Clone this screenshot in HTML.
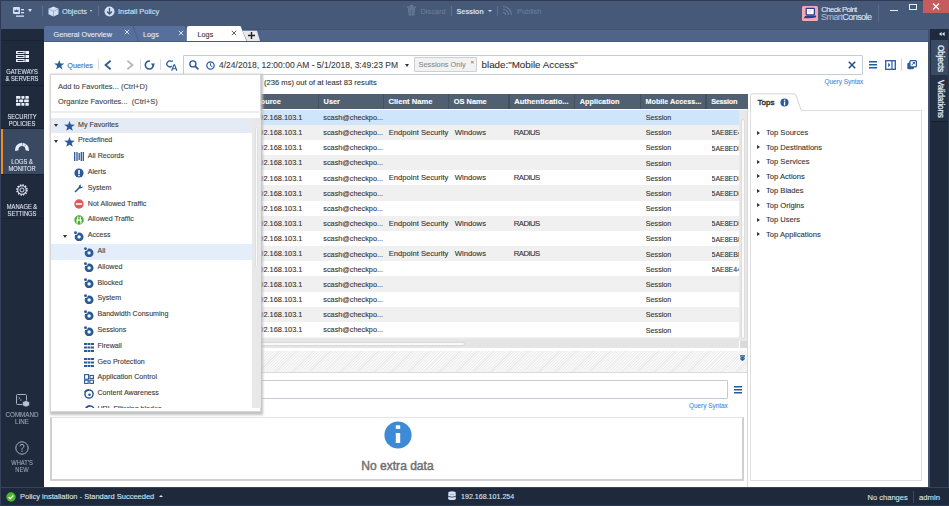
<!DOCTYPE html>
<html><head><meta charset="utf-8">
<style>
*{margin:0;padding:0;box-sizing:border-box}
html,body{width:949px;height:506px;overflow:hidden;background:#fff;font-family:"Liberation Sans",sans-serif;}
.a{position:absolute}
.t{position:absolute;white-space:nowrap;line-height:1;-webkit-text-stroke:0.1px currentColor}
#top{left:0;top:0;width:949px;height:28.5px;background:#465979;border-top:1px solid #2e3b52;border-left:1px solid #2e3b52}
#tabband{left:0;top:28.5px;width:949px;height:13.5px;background:#4f6488;border-top:0.5px solid #42546f;border-bottom:1px solid #475b7c}
#side{left:0;top:28.5px;width:44px;height:459px;background:#1f2a3d;border-left:1px solid #34435a}
#rstrip{left:928.3px;top:28.5px;width:20.7px;height:459px;background:#1f2a3d;border-left:2px solid #3f5272;border-right:1.5px solid #2c3a52}
#main{left:44px;top:41.8px;width:884.3px;height:445.5px;background:#fff;border-top-right-radius:3px}
#status{left:0;top:487px;width:949px;height:19px;background:#1e293b;border-left:1px solid #34435a}
.sb{color:#dde5f0;font-size:7.8px;text-align:center;width:60px;left:-8px;line-height:7px;transform:scaleX(0.74);transform-origin:30px 0}
.tl{color:#dbe6f5;font-size:7.4px}
.hd{position:absolute;top:93.7px;height:15.7px;background:#515f73}
.hc{position:absolute;top:0;height:15.5px;border-left:1px solid #445062;color:#fff;font-weight:bold;font-size:7.4px;line-height:15.5px;padding-left:5px;white-space:nowrap;overflow:hidden}
.row{position:absolute;left:255px;width:484px;height:15.25px}
.c{position:absolute;top:0;line-height:15.25px;font-size:7.6px;color:#3a3a3a;white-space:nowrap}
.tr{position:absolute;font-size:7.6px;color:#444;white-space:nowrap;line-height:1}
.tops{position:absolute;left:758.6px;font-size:7.6px;color:#333;white-space:nowrap;line-height:1;-webkit-text-stroke:0.1px #333}
.hdt{font-size:7.4px;color:#fff;font-weight:bold}
.dt{color:#303030}
.tt{font-size:7.1px;color:#3a3a3a}
.tops:before{content:"";position:absolute;left:-1.5px;top:1.8px;border-left:3px solid #333;border-top:2.2px solid transparent;border-bottom:2.2px solid transparent}
.tops span{position:absolute;left:7.4px;top:0}
</style></head><body>
<!-- top bar -->
<div id="top" class="a"></div>
<div id="tabband" class="a"></div>
<div id="side" class="a"></div>
<div id="rstrip" class="a"></div>
<div id="main" class="a"></div>
<div id="status" class="a"></div>
<div class="a" style="left:0;top:487px;width:949px;height:1px;background:#34435b"></div>
<div class="a" style="left:0;top:505px;width:949px;height:1px;background:#2b3950"></div>

<!-- top toolbar -->
<svg class="a" style="left:12.5px;top:6.8px" width="12" height="10" viewBox="0 0 12 10">
 <rect x="0" y="0" width="7" height="7" rx="1" fill="#cfe0f7"/>
 <path d="M1.5 5 L1.5 2.5 L2.8 3.6 L3.5 2 L4.2 3.6 L5.5 2.5 L5.5 5 Z" fill="#445673"/>
 <rect x="8" y="2" width="3" height="1.3" fill="#cfe0f7"/><rect x="8" y="5" width="3" height="1.3" fill="#cfe0f7"/>
 <rect x="3" y="8.5" width="8" height="1.3" fill="#cfe0f7"/>
</svg>
<div class="a" style="left:28px;top:9px;border-top:3px solid #cfe0f7;border-left:2px solid transparent;border-right:2px solid transparent"></div>
<div class="a" style="left:42px;top:6px;width:1px;height:10px;background:#5f7090"></div>
<svg class="a" style="left:48.4px;top:5.6px" width="11" height="11" viewBox="0 0 11 11">
 <path d="M5.5 0.5 L10.5 2.8 L10.5 8.2 L5.5 10.5 L0.5 8.2 L0.5 2.8 Z" fill="#cfe0f7"/>
 <path d="M0.8 3 L5.5 5.2 L10.2 3 M5.5 5.2 L5.5 10.3" stroke="#8ea3c4" stroke-width="0.8" fill="none"/>
</svg>
<div class="t tl" style="left:62px;top:7.5px">Objects</div>
<div class="a" style="left:89.8px;top:9.8px;border-top:2.6px solid #cfe0f7;border-left:1.9px solid transparent;border-right:1.9px solid transparent"></div>
<div class="a" style="left:98px;top:6px;width:1px;height:10px;background:#5f7090"></div>
<svg class="a" style="left:104px;top:6px" width="11" height="11" viewBox="0 0 11 11">
 <circle cx="5.5" cy="5.5" r="5" fill="#cfe0f7"/>
 <path d="M5.5 2 L5.5 8 M3 5.5 L5.5 8 L8 5.5" stroke="#445673" stroke-width="1.3" fill="none"/>
</svg>
<div class="t tl" style="left:118px;top:7.5px">Install Policy</div>

<svg class="a" style="left:407px;top:5px" width="9" height="11" viewBox="0 0 9 11">
 <rect x="0" y="1.5" width="9" height="1.2" fill="#6b7d99"/><rect x="3" y="0" width="3" height="1.5" fill="#6b7d99"/>
 <path d="M1 3.2 L8 3.2 L7.3 10.5 L1.7 10.5 Z" fill="#6b7d99"/>
 <path d="M3 4.5 L3 9.5 M4.5 4.5 L4.5 9.5 M6 4.5 L6 9.5" stroke="#445673" stroke-width="0.6"/>
</svg>
<div class="t" style="left:420.5px;top:7.5px;font-size:7.4px;color:#6b7d99">Discard</div>
<div class="a" style="left:451px;top:6px;width:1px;height:10px;background:#5f7090"></div>
<div class="t" style="left:456.5px;top:7.5px;font-size:7.4px;color:#cfe0f7;font-weight:bold;letter-spacing:-0.2px;-webkit-text-stroke:0">Session</div>
<div class="a" style="left:487.8px;top:9.8px;border-top:2.8px solid #cfe0f7;border-left:2px solid transparent;border-right:2px solid transparent"></div>
<div class="a" style="left:497px;top:6px;width:1px;height:10px;background:#5f7090"></div>
<svg class="a" style="left:502px;top:5px" width="11" height="11" viewBox="0 0 11 11">
 <path d="M1 1.5 A8.5 8.5 0 0 1 9.5 10 M1 4.5 A5.5 5.5 0 0 1 6.5 10 M1 7.5 A2.5 2.5 0 0 1 3.5 10" stroke="#6b7d99" stroke-width="1.1" fill="none"/>
</svg>
<div class="t" style="left:517px;top:7.5px;font-size:7.4px;color:#6b7d99">Publish</div>

<!-- logo -->
<div class="a" style="left:802px;top:6px;width:16px;height:15px;background:#f3a8b6;border-radius:1.5px"></div>
<svg class="a" style="left:802px;top:6px" width="16" height="15" viewBox="0 0 16 15">
 <rect x="4.2" y="2.3" width="8.2" height="6.6" rx="0.8" fill="#fff" stroke="#2b3d8c" stroke-width="1.3"/>
 <path d="M6 4.3 L10 4.3 M6 6 L9 6" stroke="#c9a0c8" stroke-width="0.5"/>
 <path d="M1.8 12.2 Q2.5 10 5 9.6 L14 9.6 L14.2 11.2 Q10 12.8 1.8 12.2 Z" fill="#2b3d8c"/>
</svg>
<div class="t" style="left:821.3px;top:6.2px;font-size:7.7px;color:#e9eef6;letter-spacing:-0.55px">Check Point</div>
<div class="t" style="left:821px;top:12.6px;font-size:9px;color:#dce6f4;letter-spacing:-0.55px"><span style="color:#a9b8cf">Smart</span>Console</div>
<div class="a" style="left:878px;top:5px;width:1px;height:17px;background:#586a88"></div>
<div class="a" style="left:890px;top:9.5px;width:8px;height:1.5px;background:#e8eef8"></div>
<div class="a" style="left:909px;top:4px;width:8px;height:6px;border:1px solid #e8eef8;border-top-width:1.5px"></div>
<div class="a" style="left:923px;top:0;width:26px;height:13px;background:#c65c5e"></div>
<svg class="a" style="left:932px;top:3px" width="8" height="7" viewBox="0 0 8 7"><path d="M1 0.5 L7 6.5 M7 0.5 L1 6.5" stroke="#fff" stroke-width="1.3"/></svg>

<!-- tabs -->
<svg class="a" style="left:44px;top:26px" width="216" height="15" viewBox="0 0 216 15">
 <path d="M0 15 L0 2 Q0 0 2 0 L88.5 0 L94.5 15 Z" fill="#56709b"/>
 <path d="M89 0.5 L94.5 15" stroke="#4a5f82" stroke-width="0.8"/>
 <path d="M89.5 0 L141 0 L143 15 L95 15 Z" fill="#56709b"/>
 <path d="M142.8 15 L142.8 2 Q142.8 0 145 0 L196.5 0 L202.5 15 Z" fill="#fff"/>
 <path d="M198.5 4.8 L213 4.8 L216 15 L203 15 Z" fill="#e9e9e9"/>
</svg>
<div class="t" style="left:53.5px;top:31px;font-size:7.3px;color:#e4ecf7">General Overview</div>
<svg class="a" style="left:123.5px;top:29.4px" width="6" height="6" viewBox="0 0 6 6"><path d="M0.8 0.8 L5.2 5.2 M5.2 0.8 L0.8 5.2" stroke="#eef3fa" stroke-width="0.85"/></svg>
<div class="t" style="left:143px;top:31px;font-size:7.3px;color:#e4ecf7">Logs</div>
<svg class="a" style="left:177.6px;top:29.6px" width="6" height="6" viewBox="0 0 6 6"><path d="M0.8 0.8 L5.2 5.2 M5.2 0.8 L0.8 5.2" stroke="#eef3fa" stroke-width="0.85"/></svg>
<div class="t" style="left:197.5px;top:31px;font-size:7.3px;color:#333">Logs</div>
<svg class="a" style="left:231.4px;top:29.6px" width="6" height="6" viewBox="0 0 6 6"><path d="M0.8 0.8 L5.2 5.2 M5.2 0.8 L0.8 5.2" stroke="#444" stroke-width="0.85"/></svg>
<svg class="a" style="left:248px;top:32px" width="7" height="7" viewBox="0 0 7 7"><path d="M3.5 0 L3.5 7 M0 3.5 L7 3.5" stroke="#222" stroke-width="1.4"/></svg>

<!-- sidebar -->
<div class="a" style="left:1px;top:39.5px;width:43px;height:1px;background:#182232"></div>
<svg class="a" style="left:16px;top:51px" width="13" height="11" viewBox="0 0 13 11">
 <rect x="0" y="0" width="13" height="3" fill="#e8eef8"/><rect x="0" y="4" width="13" height="3" fill="#e8eef8"/><rect x="0" y="8" width="13" height="3" fill="#e8eef8"/>
 <path d="M9 0.5 L9 10.5" stroke="#1f2a3d" stroke-width="0.8"/>
 <rect x="1.5" y="1" width="6" height="1" fill="#1f2a3d"/><rect x="1.5" y="5" width="6" height="1" fill="#1f2a3d"/><rect x="1.5" y="9" width="6" height="1" fill="#1f2a3d"/>
</svg>
<div class="t sb" style="top:67.5px">GATEWAYS<br>&amp; SERVERS</div>
<div class="a" style="left:1px;top:84.5px;width:43px;height:1px;background:#182232"></div>
<svg class="a" style="left:15.8px;top:96.2px" width="13" height="10" viewBox="0 0 13 10">
 <g fill="#e6eefa">
 <rect x="0" y="0" width="4.4" height="2.8" rx="0.6"/><rect x="5.4" y="0" width="3" height="2.8" rx="0.6"/><rect x="9.4" y="0" width="3.4" height="2.8" rx="0.6"/>
 <rect x="0" y="3.6" width="2.2" height="2.6" rx="0.6"/><rect x="3.1" y="3.6" width="4.1" height="2.6" rx="0.6"/><rect x="8.1" y="3.6" width="4.7" height="2.6" rx="0.6"/>
 <rect x="0" y="7" width="4.4" height="2.8" rx="0.6"/><rect x="5.4" y="7" width="3" height="2.8" rx="0.6"/><rect x="9.4" y="7" width="3.4" height="2.8" rx="0.6"/>
 </g>
</svg>
<div class="t sb" style="top:112.5px">SECURITY<br>POLICIES</div>
<div class="a" style="left:1px;top:128px;width:43px;height:1px;background:#182232"></div>
<div class="a" style="left:1px;top:129px;width:43px;height:44.5px;background:#3a4962"></div>
<div class="a" style="left:1px;top:129px;width:2px;height:44.5px;background:#f08a24"></div>
<svg class="a" style="left:15px;top:142px" width="14" height="9" viewBox="0 0 14 9">
 <path d="M1.9 8.6 A5.2 5.2 0 1 1 12.1 8.6" stroke="#e4eefb" stroke-width="3.4" fill="none"/>
 <path d="M7.4 0 L7.4 3.6 M10.6 2.6 L9.6 4.4" stroke="#3a4962" stroke-width="0.55"/>
</svg>
<div class="t sb" style="top:157.5px;color:#e2e9f3">LOGS &amp;<br>MONITOR</div>
<div class="a" style="left:1px;top:173.5px;width:43px;height:1px;background:#182232"></div>
<svg class="a" style="left:15px;top:183px" width="14" height="14" viewBox="0 0 14 14">
 <circle cx="7" cy="7" r="5" fill="none" stroke="#e8eef8" stroke-width="1.6" stroke-dasharray="1.4 1.2"/>
 <circle cx="7" cy="7" r="4.2" fill="none" stroke="#e8eef8" stroke-width="1"/>
 <circle cx="7" cy="7" r="2" fill="none" stroke="#e8eef8" stroke-width="0.9"/>
</svg>
<div class="t sb" style="top:202.5px">MANAGE &amp;<br>SETTINGS</div>
<div class="a" style="left:1px;top:218px;width:43px;height:1px;background:#182232"></div>
<svg class="a" style="left:16px;top:394px" width="14" height="13" viewBox="0 0 14 13">
 <rect x="0.5" y="0.5" width="10" height="10" rx="1" fill="none" stroke="#a6b2c4" stroke-width="1"/>
 <path d="M2.5 3 L4 4 L2.5 5 M4 6 L6 6" stroke="#a6b2c4" stroke-width="0.7" fill="none"/>
 <path d="M10 6.5 L13.5 8 L13.5 11.5 L10 13 L6.5 11.5 L6.5 8 Z" fill="#b8c4d4" stroke="#1f2a3d" stroke-width="0.6"/>
</svg>
<div class="t sb" style="top:411.3px;color:#9aa7ba;transform:scaleX(0.8)">COMMAND<br>LINE</div>
<svg class="a" style="left:15px;top:441px" width="14" height="14" viewBox="0 0 14 14">
 <circle cx="7" cy="7" r="6.2" fill="none" stroke="#a6b2c4" stroke-width="1"/>
 <path d="M5 5.3 Q5 3.3 7 3.3 Q9 3.3 9 5.2 Q9 6.3 7.5 7 L7 7.5 L7 8.7" stroke="#a6b2c4" stroke-width="1" fill="none"/>
 <circle cx="7" cy="10.3" r="0.7" fill="#a6b2c4"/>
</svg>
<div class="t sb" style="top:459px;color:#9aa7ba">WHAT'S<br>NEW</div>

<!-- right strip -->
<svg class="a" style="left:938.5px;top:32.3px" width="6" height="4" viewBox="0 0 6 4"><path d="M0 2 L2.6 0 L2.6 4 Z M3 2 L5.6 0 L5.6 4 Z" fill="#e8eef8"/></svg>
<div class="a" style="left:931px;top:40px;width:16.5px;height:34.5px;background:#3b4a63"></div>
<div class="t" style="left:935.3px;top:44.8px;font-size:8.2px;color:#eef3fa;writing-mode:vertical-rl;letter-spacing:-0.1px;-webkit-text-stroke:0.25px #eef3fa">Objects</div>
<div class="a" style="left:931px;top:74.5px;width:16.5px;height:47px;background:#243046;border-bottom:1px solid #161f2e"></div>
<div class="t" style="left:935.3px;top:80.3px;font-size:8.2px;color:#e6edf6;writing-mode:vertical-rl;letter-spacing:-0.15px;-webkit-text-stroke:0.25px #e6edf6">Validations</div>

<!-- status bar -->
<svg class="a" style="left:6.1px;top:491.8px" width="10" height="10" viewBox="0 0 10 10">
 <circle cx="5" cy="5" r="4.7" fill="#4cb82c"/>
 <path d="M2.6 5.1 L4.3 6.7 L7.4 3.5" stroke="#fff" stroke-width="1.3" fill="none"/>
</svg>
<div class="t" style="left:20px;top:493.3px;font-size:7.5px;color:#dbe5f3">Policy installation - Standard Succeeded</div>
<div class="a" style="left:158.5px;top:495px;border-bottom:2.5px solid #dbe5f3;border-left:2px solid transparent;border-right:2px solid transparent"></div>
<svg class="a" style="left:448px;top:491px" width="8" height="10" viewBox="0 0 8 10">
 <ellipse cx="4" cy="1.8" rx="3.8" ry="1.6" fill="#d4e1f5"/>
 <path d="M0.2 2.5 L0.2 4.8 Q4 6.6 7.8 4.8 L7.8 2.5 Q4 4.3 0.2 2.5 Z" fill="#d4e1f5"/>
 <path d="M0.2 5.6 L0.2 8.2 Q4 10 7.8 8.2 L7.8 5.6 Q4 7.4 0.2 5.6 Z" fill="#d4e1f5"/>
</svg>
<div class="t" style="left:461px;top:494.3px;font-size:7.1px;color:#dbe5f3">192.168.101.254</div>
<div class="t" style="left:867.5px;top:494px;font-size:7.55px;color:#dbe5f3">No changes</div>
<div class="a" style="left:913px;top:491px;width:1px;height:12px;background:#3b4a60"></div>
<div class="t" style="left:919px;top:494px;font-size:7.7px;color:#dbe5f3">admin</div>



<!-- ===== main toolbar ===== -->
<svg class="a" style="left:53.5px;top:60.3px" width="10.5" height="9.5" viewBox="0 0 10.5 9.5">
 <path d="M5.25 0 L6.5 3.4 L10.4 3.5 L7.3 5.8 L8.4 9.4 L5.25 7.3 L2.1 9.4 L3.2 5.8 L0.1 3.5 L4 3.4 Z" fill="#2a5a98"/>
</svg>
<div class="t" style="left:67.3px;top:62px;font-size:7.3px;color:#3d6aa5">Queries</div>
<div class="a" style="left:97.5px;top:59px;width:1px;height:11px;background:#d6dce4"></div>
<svg class="a" style="left:104px;top:59.8px" width="8" height="10" viewBox="0 0 8 10"><path d="M6.6 0.8 L1.6 5 L6.6 9.2" stroke="#2a5a98" stroke-width="1.8" fill="none"/></svg>
<svg class="a" style="left:126px;top:59.8px" width="8" height="10" viewBox="0 0 8 10"><path d="M1.4 0.8 L6.4 5 L1.4 9.2" stroke="#b8b8b8" stroke-width="1.8" fill="none"/></svg>
<div class="a" style="left:139.5px;top:59px;width:1px;height:11px;background:#d6dce4"></div>
<svg class="a" style="left:144px;top:60px" width="11" height="10" viewBox="0 0 11 10">
 <path d="M6 1.1 A4 4 0 1 0 9.3 4.6" stroke="#2a5a98" stroke-width="1.6" fill="none"/>
 <path d="M6.9 3.4 L11 3.4 L8.95 6.6 Z" fill="#2a5a98"/>
</svg>
<div class="a" style="left:159.5px;top:59px;width:1px;height:11px;background:#d6dce4"></div>
<svg class="a" style="left:165.5px;top:59.5px" width="12" height="11" viewBox="0 0 12 11">
 <path d="M5.5 1.6 A2.9 2.9 0 1 0 5.8 6" stroke="#2a5a98" stroke-width="1.3" fill="none"/>
 <path d="M4.5 1.6 L7 1.8 L6.6 0 Z" fill="#2a5a98"/>
 <path d="M5.6 10.8 L7.9 4.8 L8.6 4.8 L10.9 10.8 M6.5 8.8 L10 8.8" stroke="#2a5a98" stroke-width="1.1" fill="none"/>
</svg>
<!-- search box -->
<div class="a" style="left:182.5px;top:55px;width:680.5px;height:19.5px;border:1px solid #c2ccd9;border-radius:1px"></div>
<svg class="a" style="left:188.5px;top:60px" width="10" height="10" viewBox="0 0 10 10">
 <circle cx="3.9" cy="3.9" r="3" stroke="#2a5a98" stroke-width="1.4" fill="none"/>
 <path d="M6.1 6.1 L9.3 9.3" stroke="#2a5a98" stroke-width="1.8"/>
</svg>
<svg class="a" style="left:205.5px;top:60.5px" width="9" height="9" viewBox="0 0 9 9">
 <circle cx="4.5" cy="4.5" r="3.7" stroke="#2a5a98" stroke-width="1.2" fill="none"/>
 <path d="M4.5 2.2 L4.5 4.7 L6.4 5.6" stroke="#2a5a98" stroke-width="1" fill="none"/>
</svg>
<div class="t" style="left:219px;top:60.5px;font-size:8.5px;color:#3c3c3c">4/24/2018, 12:00:00 AM - 5/1/2018, 3:49:23 PM</div>
<div class="a" style="left:404.5px;top:63.5px;border-top:3px solid #333;border-left:2px solid transparent;border-right:2px solid transparent"></div>
<div class="a" style="left:414px;top:57.2px;width:62.5px;height:14.4px;background:#f2f2f2;border:1px solid #cfcfcf;border-radius:1px"></div>
<div class="t" style="left:418.5px;top:60.5px;font-size:7.4px;color:#8a8a8a">Sessions Only</div>
<div class="t" style="left:470.5px;top:58.5px;font-size:6px;color:#888">&#215;</div>
<div class="t" style="left:481.5px;top:59.7px;font-size:9.8px;color:#333">blade:"Mobile Access"</div>
<svg class="a" style="left:848px;top:61px" width="8" height="8" viewBox="0 0 8 8"><path d="M0.8 0.8 L7.2 7.2 M7.2 0.8 L0.8 7.2" stroke="#24508c" stroke-width="1.55"/></svg>
<svg class="a" style="left:869px;top:61px" width="8" height="7.5" viewBox="0 0 8 7.5"><path d="M0 0.75 L8 0.75 M0 3.75 L8 3.75 M0 6.75 L8 6.75" stroke="#2a5a98" stroke-width="1.4"/></svg>
<svg class="a" style="left:885px;top:59.8px" width="11" height="10" viewBox="0 0 11 10">
 <rect x="0.7" y="0.7" width="9.6" height="8.6" stroke="#2a5a98" stroke-width="1.3" fill="none"/>
 <path d="M7 1 L7 9" stroke="#2a5a98" stroke-width="1.2"/>
 <path d="M3.2 2.8 L5.4 5 L3.2 7.2 Z" fill="#2a5a98"/>
</svg>
<div class="a" style="left:901px;top:59px;width:1px;height:12px;background:#d0d0d0"></div>
<svg class="a" style="left:907px;top:60px" width="10" height="9.5" viewBox="0 0 10 9.5">
 <rect x="0.3" y="2.8" width="6.6" height="6.4" rx="1.2" fill="#2a5a98"/>
 <rect x="2.9" y="0.6" width="6.5" height="6.3" rx="1.2" fill="#fff" stroke="#2a5a98" stroke-width="1.3"/>
 <path d="M4.6 5.2 L7.4 2.4" stroke="#2a5a98" stroke-width="1"/><path d="M5.3 2 L7.8 2 L7.8 4.5 Z" fill="#2a5a98"/>
</svg>
<div class="t" style="left:824.5px;top:78.5px;font-size:6.4px;color:#3b8fe8">Query Syntax</div>
<div class="t" style="left:264px;top:78.5px;font-size:7.6px;color:#333">(236 ms) out of at least 83 results</div>


<!-- ===== table ===== -->
<div class="hd" style="left:253px;width:494.5px"></div>
<div class="t hdt" style="left:255.7px;top:98.04px">Source</div>
<div class="a" style="left:317.6px;top:93.7px;width:1.5px;height:15.7px;background:#444f5f"></div>
<div class="t hdt" style="left:323.6px;top:98.10px;font-size:7.33px;letter-spacing:0">User</div>
<div class="a" style="left:382.5px;top:93.7px;width:1.5px;height:15.7px;background:#444f5f"></div>
<div class="t hdt" style="left:388.5px;top:97.87px;font-size:7.6px;letter-spacing:0">Client Name</div>
<div class="a" style="left:447.8px;top:93.7px;width:1.5px;height:15.7px;background:#444f5f"></div>
<div class="t hdt" style="left:453.8px;top:98.02px;font-size:7.42px;letter-spacing:0">OS Name</div>
<div class="a" style="left:508.3px;top:93.7px;width:1.5px;height:15.7px;background:#444f5f"></div>
<div class="t hdt" style="left:514.3px;top:97.95px;font-size:7.5px;letter-spacing:0">Authenticatio...</div>
<div class="a" style="left:573.8px;top:93.7px;width:1.5px;height:15.7px;background:#444f5f"></div>
<div class="t hdt" style="left:579.8px;top:98.11px;font-size:7.31px;letter-spacing:0">Application</div>
<div class="a" style="left:639.5px;top:93.7px;width:1.5px;height:15.7px;background:#444f5f"></div>
<div class="t hdt" style="left:645.5px;top:98.21px;font-size:7.19px;letter-spacing:0">Mobile Access...</div>
<div class="a" style="left:705.1999999999999px;top:93.7px;width:1.5px;height:15.7px;background:#444f5f"></div>
<div class="t hdt" style="left:711.1999999999999px;top:98.12px;font-size:7.3px;letter-spacing:-0.3px">Session</div>
<div class="a" style="left:253px;top:109.50px;width:486px;height:15.23px;background:#cfe5fb"></div>
<div class="t dt" style="left:259.3px;top:113.84px;font-size:7.4px">92.168.103.1</div>
<div class="t dt" style="left:323.3px;top:113.92px;font-size:7.3px">scash@checkpo...</div>
<div class="t dt" style="left:645.8px;top:114.01px;font-size:7.2px">Session</div>
<div class="a" style="left:253px;top:124.68px;width:486px;height:15.23px;background:#f0f0f0"></div>
<div class="t dt" style="left:259.3px;top:129.02px;font-size:7.4px">92.168.103.1</div>
<div class="t dt" style="left:323.3px;top:129.10px;font-size:7.3px">scash@checkpo...</div>
<div class="t dt" style="left:388.8px;top:128.85px;font-size:7.6px">Endpoint Security</div>
<div class="t dt" style="left:454.8px;top:128.76px;font-size:7.7px">Windows</div>
<div class="t dt" style="left:513.8px;top:128.76px;font-size:7.7px;letter-spacing:-0.55px">RADIUS</div>
<div class="t dt" style="left:645.8px;top:129.19px;font-size:7.2px">Session</div>
<div class="a" style="left:711.5px;top:124.68px;width:27.5px;height:15.3px;overflow:hidden"><div class="t dt" style="left:0;top:4.67px;font-size:7.0px">5AE8EE4</div></div>
<div class="a" style="left:253px;top:139.86px;width:486px;height:15.23px;background:#ffffff"></div>
<div class="t dt" style="left:259.3px;top:144.20px;font-size:7.4px">92.168.103.1</div>
<div class="t dt" style="left:323.3px;top:144.28px;font-size:7.3px">scash@checkpo...</div>
<div class="t dt" style="left:645.8px;top:144.37px;font-size:7.2px">Session</div>
<div class="a" style="left:711.5px;top:139.86px;width:27.5px;height:15.3px;overflow:hidden"><div class="t dt" style="left:0;top:4.67px;font-size:7.0px">5AE8EDI</div></div>
<div class="a" style="left:253px;top:155.04px;width:486px;height:15.23px;background:#f0f0f0"></div>
<div class="t dt" style="left:259.3px;top:159.38px;font-size:7.4px">92.168.103.1</div>
<div class="t dt" style="left:323.3px;top:159.46px;font-size:7.3px">scash@checkpo...</div>
<div class="t dt" style="left:645.8px;top:159.55px;font-size:7.2px">Session</div>
<div class="a" style="left:253px;top:170.22px;width:486px;height:15.23px;background:#ffffff"></div>
<div class="t dt" style="left:259.3px;top:174.56px;font-size:7.4px">92.168.103.1</div>
<div class="t dt" style="left:323.3px;top:174.64px;font-size:7.3px">scash@checkpo...</div>
<div class="t dt" style="left:388.8px;top:174.39px;font-size:7.6px">Endpoint Security</div>
<div class="t dt" style="left:454.8px;top:174.30px;font-size:7.7px">Windows</div>
<div class="t dt" style="left:513.8px;top:174.30px;font-size:7.7px;letter-spacing:-0.55px">RADIUS</div>
<div class="t dt" style="left:645.8px;top:174.73px;font-size:7.2px">Session</div>
<div class="a" style="left:711.5px;top:170.22px;width:27.5px;height:15.3px;overflow:hidden"><div class="t dt" style="left:0;top:4.67px;font-size:7.0px">5AE8EDI</div></div>
<div class="a" style="left:253px;top:185.40px;width:486px;height:15.23px;background:#f0f0f0"></div>
<div class="t dt" style="left:259.3px;top:189.74px;font-size:7.4px">92.168.103.1</div>
<div class="t dt" style="left:323.3px;top:189.82px;font-size:7.3px">scash@checkpo...</div>
<div class="t dt" style="left:645.8px;top:189.91px;font-size:7.2px">Session</div>
<div class="a" style="left:711.5px;top:185.40px;width:27.5px;height:15.3px;overflow:hidden"><div class="t dt" style="left:0;top:4.67px;font-size:7.0px">5AE8EDI</div></div>
<div class="a" style="left:253px;top:200.58px;width:486px;height:15.23px;background:#ffffff"></div>
<div class="t dt" style="left:259.3px;top:204.92px;font-size:7.4px">92.168.103.1</div>
<div class="t dt" style="left:323.3px;top:205.00px;font-size:7.3px">scash@checkpo...</div>
<div class="t dt" style="left:645.8px;top:205.09px;font-size:7.2px">Session</div>
<div class="a" style="left:253px;top:215.76px;width:486px;height:15.23px;background:#f0f0f0"></div>
<div class="t dt" style="left:259.3px;top:220.10px;font-size:7.4px">92.168.103.1</div>
<div class="t dt" style="left:323.3px;top:220.18px;font-size:7.3px">scash@checkpo...</div>
<div class="t dt" style="left:388.8px;top:219.93px;font-size:7.6px">Endpoint Security</div>
<div class="t dt" style="left:454.8px;top:219.84px;font-size:7.7px">Windows</div>
<div class="t dt" style="left:513.8px;top:219.84px;font-size:7.7px;letter-spacing:-0.55px">RADIUS</div>
<div class="t dt" style="left:645.8px;top:220.27px;font-size:7.2px">Session</div>
<div class="a" style="left:711.5px;top:215.76px;width:27.5px;height:15.3px;overflow:hidden"><div class="t dt" style="left:0;top:4.67px;font-size:7.0px">5AE8EDI</div></div>
<div class="a" style="left:253px;top:230.94px;width:486px;height:15.23px;background:#ffffff"></div>
<div class="t dt" style="left:259.3px;top:235.28px;font-size:7.4px">92.168.103.1</div>
<div class="t dt" style="left:323.3px;top:235.36px;font-size:7.3px">scash@checkpo...</div>
<div class="t dt" style="left:645.8px;top:235.45px;font-size:7.2px">Session</div>
<div class="a" style="left:711.5px;top:230.94px;width:27.5px;height:15.3px;overflow:hidden"><div class="t dt" style="left:0;top:4.67px;font-size:7.0px">5AE8EBE</div></div>
<div class="a" style="left:253px;top:246.12px;width:486px;height:15.23px;background:#f0f0f0"></div>
<div class="t dt" style="left:259.3px;top:250.46px;font-size:7.4px">92.168.103.1</div>
<div class="t dt" style="left:323.3px;top:250.54px;font-size:7.3px">scash@checkpo...</div>
<div class="t dt" style="left:388.8px;top:250.29px;font-size:7.6px">Endpoint Security</div>
<div class="t dt" style="left:454.8px;top:250.20px;font-size:7.7px">Windows</div>
<div class="t dt" style="left:513.8px;top:250.20px;font-size:7.7px;letter-spacing:-0.55px">RADIUS</div>
<div class="t dt" style="left:645.8px;top:250.63px;font-size:7.2px">Session</div>
<div class="a" style="left:711.5px;top:246.12px;width:27.5px;height:15.3px;overflow:hidden"><div class="t dt" style="left:0;top:4.67px;font-size:7.0px">5AE8EBE</div></div>
<div class="a" style="left:253px;top:261.30px;width:486px;height:15.23px;background:#ffffff"></div>
<div class="t dt" style="left:259.3px;top:265.64px;font-size:7.4px">92.168.103.1</div>
<div class="t dt" style="left:323.3px;top:265.72px;font-size:7.3px">scash@checkpo...</div>
<div class="t dt" style="left:645.8px;top:265.81px;font-size:7.2px">Session</div>
<div class="a" style="left:711.5px;top:261.30px;width:27.5px;height:15.3px;overflow:hidden"><div class="t dt" style="left:0;top:4.67px;font-size:7.0px">5AE8E44</div></div>
<div class="a" style="left:253px;top:276.48px;width:486px;height:15.23px;background:#f0f0f0"></div>
<div class="t dt" style="left:259.3px;top:280.82px;font-size:7.4px">92.168.103.1</div>
<div class="t dt" style="left:323.3px;top:280.90px;font-size:7.3px">scash@checkpo...</div>
<div class="t dt" style="left:645.8px;top:280.99px;font-size:7.2px">Session</div>
<div class="a" style="left:253px;top:291.66px;width:486px;height:15.23px;background:#ffffff"></div>
<div class="t dt" style="left:259.3px;top:296.00px;font-size:7.4px">92.168.103.1</div>
<div class="t dt" style="left:323.3px;top:296.08px;font-size:7.3px">scash@checkpo...</div>
<div class="t dt" style="left:645.8px;top:296.17px;font-size:7.2px">Session</div>
<div class="a" style="left:253px;top:306.84px;width:486px;height:15.23px;background:#f0f0f0"></div>
<div class="t dt" style="left:259.3px;top:311.18px;font-size:7.4px">92.168.103.1</div>
<div class="t dt" style="left:323.3px;top:311.26px;font-size:7.3px">scash@checkpo...</div>
<div class="t dt" style="left:645.8px;top:311.35px;font-size:7.2px">Session</div>
<div class="a" style="left:253px;top:322.02px;width:486px;height:15.23px;background:#ffffff"></div>
<div class="t dt" style="left:259.3px;top:326.36px;font-size:7.4px">92.168.103.1</div>
<div class="t dt" style="left:323.3px;top:326.44px;font-size:7.3px">scash@checkpo...</div>
<div class="t dt" style="left:645.8px;top:326.53px;font-size:7.2px">Session</div>
<!-- vscroll -->
<div class="a" style="left:739px;top:109.5px;width:8px;height:231px;background:#e8e8e8"></div>
<div class="a" style="left:740.8px;top:119px;width:4.2px;height:220px;background:#fbfbfb;border:1px solid #dcdcdc;border-radius:2px"></div>
<!-- hscroll -->
<div class="a" style="left:253px;top:337px;width:486px;height:10.8px;background:linear-gradient(#f4f4f4,#e5e5e5 2.5px,#e5e5e5)"></div>
<div class="a" style="left:253px;top:341.5px;width:212px;height:4px;background:#fafafa;border:1px solid #d8d8d8;border-radius:2px"></div>
<div class="a" style="left:739.5px;top:340.5px;width:7.5px;height:7.5px;background:#dadada"></div>
<!-- right border of left panel -->
<div class="a" style="left:746.5px;top:109px;width:1.2px;height:378px;background:#d8d8d8"></div>
<!-- hatched band -->
<div class="a" style="left:51px;top:351.2px;width:696px;height:22px;border-bottom:1px solid #dadada;background:repeating-linear-gradient(135deg,#f8f8f8 0px,#f8f8f8 1.2px,#ebebeb 1.2px,#ebebeb 2px)"></div>
<svg class="a" style="left:740px;top:354.5px" width="5" height="6" viewBox="0 0 5 6"><path d="M0 0.5 L5 0.5 M0.3 1.8 L4.7 1.8 L2.5 3.6 Z M0.3 3.8 L4.7 3.8 L2.5 5.8 Z" stroke="#2a5a98" stroke-width="0.8" fill="#2a5a98"/></svg>
<!-- lower search -->
<div class="a" style="left:51px;top:379.5px;width:677px;height:19px;border:1px solid #c2ccd9;border-radius:1px"></div>
<svg class="a" style="left:734px;top:386px" width="8" height="7.5" viewBox="0 0 8 7.5"><path d="M0 0.75 L8 0.75 M0 3.75 L8 3.75 M0 6.75 L8 6.75" stroke="#2a5a98" stroke-width="1.4"/></svg>
<div class="t" style="left:689px;top:403px;font-size:6.4px;color:#3b8fe8">Query Syntax</div>
<!-- lower panel -->
<div class="a" style="left:50.1px;top:417px;width:693.5px;height:63.6px;border:2px solid #d0d0d0;border-top:1px solid #e4e4e4"></div>
<svg class="a" style="left:383.5px;top:421px" width="28" height="28" viewBox="0 0 28 28">
 <circle cx="14" cy="14" r="13.6" fill="#3d8bd6"/>
 <rect x="11.8" y="4.3" width="4.4" height="3.6" fill="#fff"/>
 <rect x="11.8" y="12" width="4.4" height="10" fill="#fff"/>
</svg>
<div class="t" style="left:361.3px;top:460.2px;font-size:12.05px;color:#707070;-webkit-text-stroke:0.45px #707070">No extra data</div>
<!-- tops panel -->
<div class="a" style="left:750px;top:110.3px;width:172px;height:370.5px;border:1.5px solid #dedede;border-top-width:1px"></div>
<svg class="a" style="left:750px;top:92.8px" width="53" height="19" viewBox="0 0 53 19">
 <path d="M0.5 18.5 L0.5 2.8 Q0.5 0.8 2.5 0.8 L44 0.8 Q45.5 0.8 46 2.3 L51.5 18.2" stroke="#d4d4d4" stroke-width="1" fill="#fff"/>
 <rect x="1" y="17.4" width="50" height="2" fill="#fff"/>
</svg>
<div class="t" style="left:757.5px;top:98.6px;font-size:8px;color:#333;-webkit-text-stroke:0.4px #333">Tops</div>
<svg class="a" style="left:780.3px;top:97.6px" width="9" height="9" viewBox="0 0 9 9"><circle cx="4.5" cy="4.5" r="4.05" fill="#2a5a98"/><rect x="3.9" y="1.6" width="1.3" height="1.2" fill="#fff"/><rect x="3.9" y="3.5" width="1.3" height="3.9" fill="#fff"/></svg>


<div class="tops" style="top:129.00px"><span>Top Sources</span></div>
<div class="tops" style="top:143.50px"><span>Top Destinations</span></div>
<div class="tops" style="top:158.00px"><span>Top Services</span></div>
<div class="tops" style="top:172.50px"><span>Top Actions</span></div>
<div class="tops" style="top:187.00px"><span>Top Blades</span></div>
<div class="tops" style="top:201.50px"><span>Top Origins</span></div>
<div class="tops" style="top:216.00px"><span>Top Users</span></div>
<div class="tops" style="top:230.50px"><span>Top Applications</span></div>
<!-- ===== dropdown ===== -->
<div class="a" style="left:50px;top:74px;width:212.5px;height:341px;background:linear-gradient(#bdbdbd,#bdbdbd);filter:blur(1px);opacity:0.9"></div>
<div class="a" style="left:50px;top:74px;width:210.8px;height:338px;background:#fff;border:1px solid #d6d6d6"></div>
<div class="t" style="left:58px;top:82.5px;font-size:7.5px;color:#444">Add to Favorites... (Ctrl+D)</div>
<div class="t" style="left:58px;top:97.5px;font-size:7.5px;color:#444">Organize Favorites...&nbsp; (Ctrl+S)</div>
<div class="a" style="left:51px;top:111.2px;width:209.5px;height:1.6px;background:#eeeeee"></div>
<div class="a" style="left:51px;top:118.2px;width:201.5px;height:14.6px;background:#e5ebf4"></div>
<div class="a" style="left:51px;top:244.2px;width:201.5px;height:15.5px;background:#e4eefb"></div>
<div class="a" style="left:252.3px;top:118.2px;width:8.5px;height:290px;background:#e8e8e8"></div>
<div class="a" style="left:254.5px;top:127.3px;width:3.8px;height:140px;background:#fafafa;border:1px solid #dedede;border-radius:2px"></div>


<div class="t tt" style="left:78px;top:121.69px">My Favorites</div>
<svg class="a" style="left:64px;top:120.80px" width="11" height="10" viewBox="0 0 10.5 9.5"><path d="M5.25 0 L6.5 3.4 L10.4 3.5 L7.3 5.8 L8.4 9.4 L5.25 7.3 L2.1 9.4 L3.2 5.8 L0.1 3.5 L4 3.4 Z" fill="#2a5a98"/></svg>
<div class="a" style="left:53.5px;top:124.40px;border-top:3px solid #333;border-left:2px solid transparent;border-right:2px solid transparent"></div>
<div class="t tt" style="left:78px;top:137.49px">Predefined</div>
<svg class="a" style="left:64px;top:136.60px" width="11" height="10" viewBox="0 0 10.5 9.5"><path d="M5.25 0 L6.5 3.4 L10.4 3.5 L7.3 5.8 L8.4 9.4 L5.25 7.3 L2.1 9.4 L3.2 5.8 L0.1 3.5 L4 3.4 Z" fill="#2a5a98"/></svg>
<div class="a" style="left:53.5px;top:140.20px;border-top:3px solid #333;border-left:2px solid transparent;border-right:2px solid transparent"></div>
<div class="t tt" style="left:87.8px;top:153.29px">All Records</div>
<svg class="a" style="left:73.8px;top:151.80px" width="10" height="9" viewBox="0 0 10 9"><path d="M0.7 0 L0.7 9 M3 0 L3 9 M5.2 1 L5.2 8 M7.3 0 L7.3 9 M9.3 0 L9.3 9" stroke="#2a5a98" stroke-width="1.3"/></svg>
<div class="t tt" style="left:87.8px;top:169.09px">Alerts</div>
<svg class="a" style="left:73.8px;top:167.60px" width="10" height="10" viewBox="0 0 10 10"><circle cx="5" cy="5" r="4.6" fill="#2a5a98"/><rect x="4.2" y="2" width="1.6" height="4" fill="#fff"/><rect x="4.2" y="6.8" width="1.6" height="1.4" fill="#fff"/></svg>
<div class="t tt" style="left:87.8px;top:184.89px">System</div>
<svg class="a" style="left:73.8px;top:183.40px" width="10" height="10" viewBox="0 0 10 10"><path d="M1 9 L5.5 4.5" stroke="#2a5a98" stroke-width="1.6"/><path d="M5 5.5 Q4 2 7 1.5 L6.5 3 L7.5 4 L9 3.5 Q8.5 6 5 5.5 Z" fill="#2a5a98"/></svg>
<div class="t tt" style="left:87.8px;top:200.69px">Not Allowed Traffic</div>
<svg class="a" style="left:73.8px;top:199.20px" width="10" height="10" viewBox="0 0 10 10"><circle cx="5" cy="5" r="4.7" fill="#e05a5a"/><rect x="1.9" y="4.2" width="6.2" height="1.6" fill="#fff"/></svg>
<div class="t tt" style="left:87.8px;top:216.49px">Allowed Traffic</div>
<svg class="a" style="left:73.8px;top:215.00px" width="10" height="10" viewBox="0 0 10 10"><circle cx="5" cy="5" r="4.7" fill="#4cab2f"/><path d="M3.9 1.6 L2.9 8.6 M6.1 1.6 L7.1 8.6 M2.2 5.2 L7.8 5.2" stroke="#fff" stroke-width="1.2"/></svg>
<div class="t tt" style="left:87.8px;top:232.29px">Access</div>
<svg class="a" style="left:73.8px;top:230.80px" width="10" height="10" viewBox="0 0 10 10"><circle cx="5.1" cy="5.9" r="3.05" stroke="#2a5a98" stroke-width="2.7" fill="none"/><circle cx="1.5" cy="1.8" r="2.3" fill="#fff"/><circle cx="1.5" cy="1.8" r="1.45" fill="#2a5a98"/></svg>
<div class="a" style="left:62.8px;top:235.00px;border-top:3px solid #333;border-left:2px solid transparent;border-right:2px solid transparent"></div>
<div class="t tt" style="left:97.5px;top:248.09px">All</div>
<svg class="a" style="left:83.5px;top:246.60px" width="10" height="10" viewBox="0 0 10 10"><circle cx="5.1" cy="5.9" r="3.05" stroke="#2a5a98" stroke-width="2.7" fill="none"/><circle cx="1.5" cy="1.8" r="2.3" fill="#fff"/><circle cx="1.5" cy="1.8" r="1.45" fill="#2a5a98"/></svg>
<div class="t tt" style="left:97.5px;top:263.89px">Allowed</div>
<svg class="a" style="left:83.5px;top:262.40px" width="10" height="10" viewBox="0 0 10 10"><circle cx="5.1" cy="5.9" r="3.05" stroke="#2a5a98" stroke-width="2.7" fill="none"/><circle cx="1.5" cy="1.8" r="2.3" fill="#fff"/><circle cx="1.5" cy="1.8" r="1.45" fill="#2a5a98"/></svg>
<div class="t tt" style="left:97.5px;top:279.69px">Blocked</div>
<svg class="a" style="left:83.5px;top:278.20px" width="10" height="10" viewBox="0 0 10 10"><circle cx="5.1" cy="5.9" r="3.05" stroke="#2a5a98" stroke-width="2.7" fill="none"/><circle cx="1.5" cy="1.8" r="2.3" fill="#fff"/><circle cx="1.5" cy="1.8" r="1.45" fill="#2a5a98"/></svg>
<div class="t tt" style="left:97.5px;top:295.49px">System</div>
<svg class="a" style="left:83.5px;top:294.00px" width="10" height="10" viewBox="0 0 10 10"><circle cx="5.1" cy="5.9" r="3.05" stroke="#2a5a98" stroke-width="2.7" fill="none"/><circle cx="1.5" cy="1.8" r="2.3" fill="#fff"/><circle cx="1.5" cy="1.8" r="1.45" fill="#2a5a98"/></svg>
<div class="t tt" style="left:97.5px;top:311.29px">Bandwidth Consuming</div>
<svg class="a" style="left:83.5px;top:309.80px" width="10" height="10" viewBox="0 0 10 10"><circle cx="5.1" cy="5.9" r="3.05" stroke="#2a5a98" stroke-width="2.7" fill="none"/><circle cx="1.5" cy="1.8" r="2.3" fill="#fff"/><circle cx="1.5" cy="1.8" r="1.45" fill="#2a5a98"/></svg>
<div class="t tt" style="left:97.5px;top:327.09px">Sessions</div>
<svg class="a" style="left:83.5px;top:325.60px" width="10" height="10" viewBox="0 0 10 10"><circle cx="5.1" cy="5.9" r="3.05" stroke="#2a5a98" stroke-width="2.7" fill="none"/><circle cx="1.5" cy="1.8" r="2.3" fill="#fff"/><circle cx="1.5" cy="1.8" r="1.45" fill="#2a5a98"/></svg>
<div class="t tt" style="left:97.5px;top:342.89px">Firewall</div>
<svg class="a" style="left:83.5px;top:342.60px" width="10" height="9" viewBox="0 0 10 9"><path d="M0 1 L3 1 M3.5 1 L6.5 1 M7 1 L10 1 M0 4.5 L3 4.5 M3.5 4.5 L6.5 4.5 M7 4.5 L10 4.5 M0 8 L3 8 M3.5 8 L6.5 8 M7 8 L10 8" stroke="#2a5a98" stroke-width="1.9"/></svg>
<div class="t tt" style="left:97.5px;top:358.69px">Geo Protection</div>
<svg class="a" style="left:83.5px;top:358.40px" width="10" height="9" viewBox="0 0 10 9"><path d="M0 1 L3 1 M3.5 1 L6.5 1 M7 1 L10 1 M0 4.5 L3 4.5 M3.5 4.5 L6.5 4.5 M7 4.5 L10 4.5 M0 8 L3 8 M3.5 8 L6.5 8 M7 8 L10 8" stroke="#2a5a98" stroke-width="1.9"/></svg>
<div class="t tt" style="left:97.5px;top:374.49px">Application Control</div>
<svg class="a" style="left:83.5px;top:373.60px" width="10" height="10" viewBox="0 0 10 10"><rect x="0.6" y="0.6" width="4" height="4.6" stroke="#2a5a98" stroke-width="1.1" fill="none"/><rect x="6" y="1.5" width="3.4" height="3" stroke="#2a5a98" stroke-width="1.1" fill="none"/><rect x="0.6" y="6.2" width="3.6" height="3.2" stroke="#2a5a98" stroke-width="1.1" fill="none"/><rect x="5.8" y="6.2" width="3.6" height="3.2" stroke="#2a5a98" stroke-width="1.1" fill="none"/></svg>
<div class="t tt" style="left:97.5px;top:390.29px">Content Awareness</div>
<svg class="a" style="left:83.5px;top:389.10px" width="10" height="10" viewBox="0 0 10 10"><circle cx="5" cy="5" r="4.1" stroke="#2a5a98" stroke-width="1.5" fill="none"/><path d="M0.8 3 Q2.5 0.8 5 1.2" stroke="#2a5a98" stroke-width="1.8" fill="none"/><circle cx="5.5" cy="5.8" r="1.3" fill="#2a5a98"/></svg>
<div class="a" style="left:51px;top:404px;width:201px;height:3.6px;overflow:hidden"><div class="t tt" style="left:46.5px;top:2.0px">URL Filtering blades</div><svg class="a" style="left:33.5px;top:1.2px" width="10" height="10" viewBox="0 0 10 10"><circle cx="5" cy="5" r="4.1" stroke="#2a5a98" stroke-width="1.5" fill="none"/><path d="M0.8 3 Q2.5 0.8 5 1.2" stroke="#2a5a98" stroke-width="1.8" fill="none"/><circle cx="5.5" cy="5.8" r="1.3" fill="#2a5a98"/></svg></div>
</body></html>
